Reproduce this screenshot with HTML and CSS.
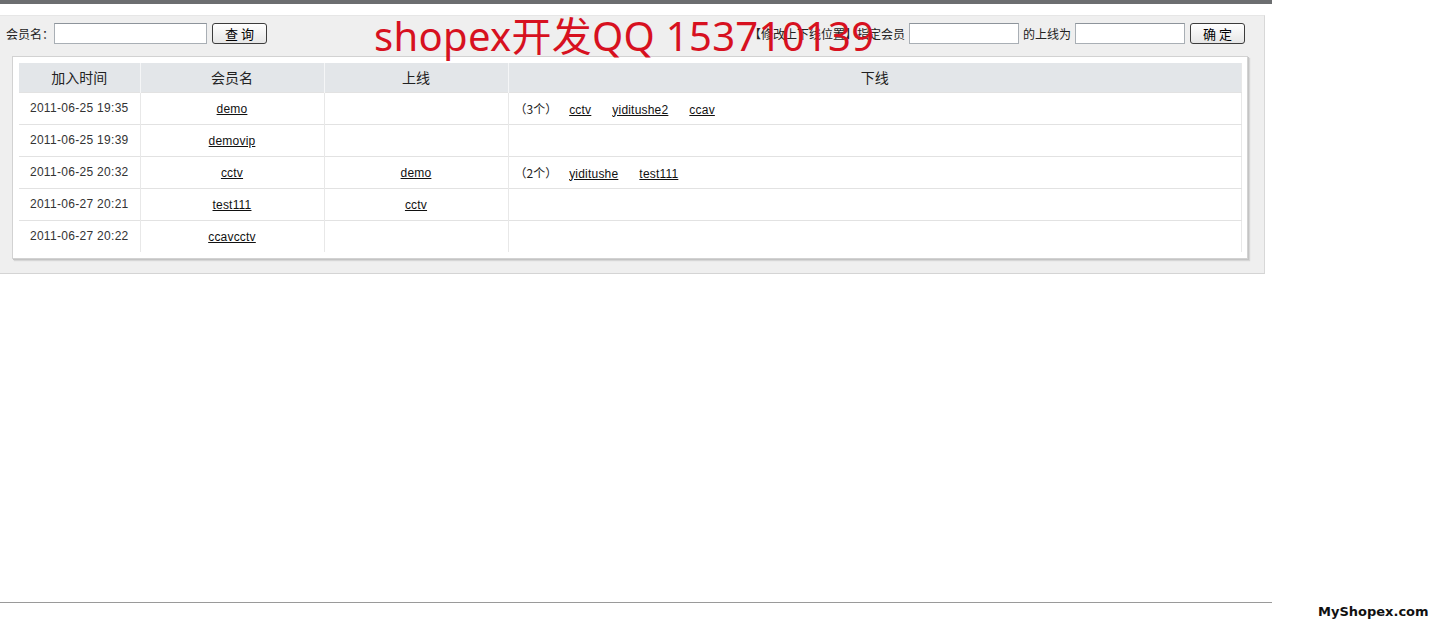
FILE: index.html
```html
<!DOCTYPE html>
<html lang="zh-CN">

<head>
    <meta charset="UTF-8" />
    <title>会员上下线</title>
    <link rel="stylesheet" href="styles.css">
</head>

<body>
    <div class="page">
        <div class="topbar"></div>

        <div class="panel">
            <div class="watermark">shopex开发QQ 153710139</div>

            <div class="toolbar">
                <form class="group">
                    <label for="uname" class="lbl">会员名：</label>
                    <input type="text" id="uname" class="inp-wide" />
                    <button type="button" class="btn">查 询</button>
                </form>
                <form class="group">
                    <span>【修改上下线位置】指定会员</span>
                    <input type="text" class="inp" />
                    <span>的上线为</span>
                    <input type="text" class="inp" />
                    <button type="button" class="btn">确 定</button>
                </form>
            </div>

            <div class="box">
                <table class="grid">
                    <thead>
                        <tr>
                            <th class="c-time">加入时间</th>
                            <th class="c-name">会员名</th>
                            <th class="c-name">上线</th>
                            <th>下线</th>
                        </tr>
                    </thead>
                    <tbody>
                        <tr>
                            <td class="date">2011-06-25 19:35</td>
                            <td><a href="#">demo</a></td>
                            <td></td>
                            <td class="down"><span class="count">（3个）</span><a href="#">cctv</a><a href="#">yiditushe2</a><a href="#">ccav</a></td>
                        </tr>
                        <tr>
                            <td class="date">2011-06-25 19:39</td>
                            <td><a href="#">demovip</a></td>
                            <td></td>
                            <td class="down"></td>
                        </tr>
                        <tr>
                            <td class="date">2011-06-25 20:32</td>
                            <td><a href="#">cctv</a></td>
                            <td><a href="#">demo</a></td>
                            <td class="down"><span class="count">（2个）</span><a href="#">yiditushe</a><a href="#">test111</a></td>
                        </tr>
                        <tr>
                            <td class="date">2011-06-27 20:21</td>
                            <td><a href="#">test111</a></td>
                            <td><a href="#">cctv</a></td>
                            <td class="down"></td>
                        </tr>
                        <tr>
                            <td class="date">2011-06-27 20:22</td>
                            <td><a href="#">ccavcctv</a></td>
                            <td></td>
                            <td class="down"></td>
                        </tr>
                    </tbody>
                </table>
            </div>
        </div>
    </div>

    <div class="footer">
        <div class="rule"></div>
        <div class="logo">MyShopex.com</div>
    </div>
</body>

</html>
```

FILE: styles.css
```css
* {
    box-sizing: border-box;
}

body {
    margin: 0;
    min-height: 100vh;
    display: flex;
    flex-direction: column;
    font-family: 'Liberation Sans', 'Noto Sans CJK SC', sans-serif;
    font-size: 12px;
    color: #222;
    background: #fff;
}

.page {
    width: 1272px;
}

.topbar {
    height: 4px;
    background: #6c6e70;
    margin-bottom: 11px;
}

.panel {
    position: relative;
    width: 1265px;
    background: #efefef;
    border-top: 1px solid #e6e6e6;
    border-right: 1px solid #d8d8d8;
    border-bottom: 1px solid #d4d4d4;
    padding: 7px 19px 14px 6px;
}

.watermark {
    position: absolute;
    left: 374px;
    top: 0;
    font-family: 'Noto Sans', 'Noto Sans CJK SC', sans-serif;
    font-size: 40px;
    line-height: 40px;
    letter-spacing: 0.3px;
    color: #d7111f;
    white-space: nowrap;
    pointer-events: none;
    z-index: 2;
}

.toolbar {
    display: flex;
    justify-content: space-between;
    align-items: center;
    height: 21px;
}

.group {
    display: flex;
    align-items: center;
    gap: 4px;
    margin: 0;
}

.group label,
.group span {
    font-family: 'Noto Sans CJK SC', sans-serif;
    font-size: 12px;
    color: #222;
}

.lbl {
    margin-right: -4px;
}

.inp-wide,
.inp {
    height: 21px;
    border: 1px solid #a9afb5;
    border-top-color: #8d949b;
    background: #fff;
    padding: 0 3px;
    font-size: 12px;
}

.inp-wide {
    width: 153px;
}

.inp {
    width: 110px;
}

.btn {
    width: 55px;
    height: 21px;
    margin-left: 1px;
    border: 1px solid #3c3c3c;
    border-radius: 3px;
    background: linear-gradient(#ffffff, #e6e6e6);
    font-family: 'Noto Sans CJK SC', sans-serif;
    font-size: 13px;
    line-height: 17px;
    color: #000;
    padding: 0;
    cursor: pointer;
}

.box {
    margin: 12px 0 0 6px;
    width: 1236px;
    background: #fff;
    border: 1px solid #d2d2d2;
    box-shadow: 1px 1px 0 #c4c4c4, 2px 2px 1px #d6d6d6;
    padding: 6px 5px 6px 6px;
}

.grid {
    width: 100%;
    border-collapse: collapse;
    border-right: 1px solid #e8e8e8;
}

.grid th {
    height: 29px;
    background: #e3e6e9;
    font-family: 'Noto Sans CJK SC', sans-serif;
    font-weight: normal;
    font-size: 14px;
    color: #222;
    border-left: 1px solid #f5f6f7;
    padding: 0;
}

.grid th:first-child {
    border-left: none;
}

.c-time {
    width: 121px;
}

.c-name {
    width: 184px;
}

.grid td {
    height: 32px;
    text-align: center;
    border-top: 1px solid #e2e2e2;
    border-left: 1px solid #e8e8e8;
    padding: 2px 0 0;
    line-height: 14px;
    color: #222;
}

.grid td:first-child {
    border-left: none;
}

.grid td.date {
    letter-spacing: 0.3px;
    color: #333;
    padding-top: 0;
}

.grid a {
    color: #111;
    text-decoration: underline;
    letter-spacing: 0.2px;
}

.grid td.down {
    text-align: left;
    padding-left: 6px;
}

.count {
    font-family: 'Noto Sans CJK SC', sans-serif;
    line-height: 14px;
    margin-right: 12px;
}

.down a {
    margin-right: 21px;
}

.footer {
    margin-top: auto;
    height: 33px;
    display: flex;
    align-items: flex-start;
}

.rule {
    width: 1272px;
    border-top: 1px solid #9a9a9a;
}

.logo {
    margin-left: 46px;
    padding-top: 2px;
    font-family: 'DejaVu Sans', sans-serif;
    font-weight: bold;
    font-size: 13px;
    color: #111;
}
```
